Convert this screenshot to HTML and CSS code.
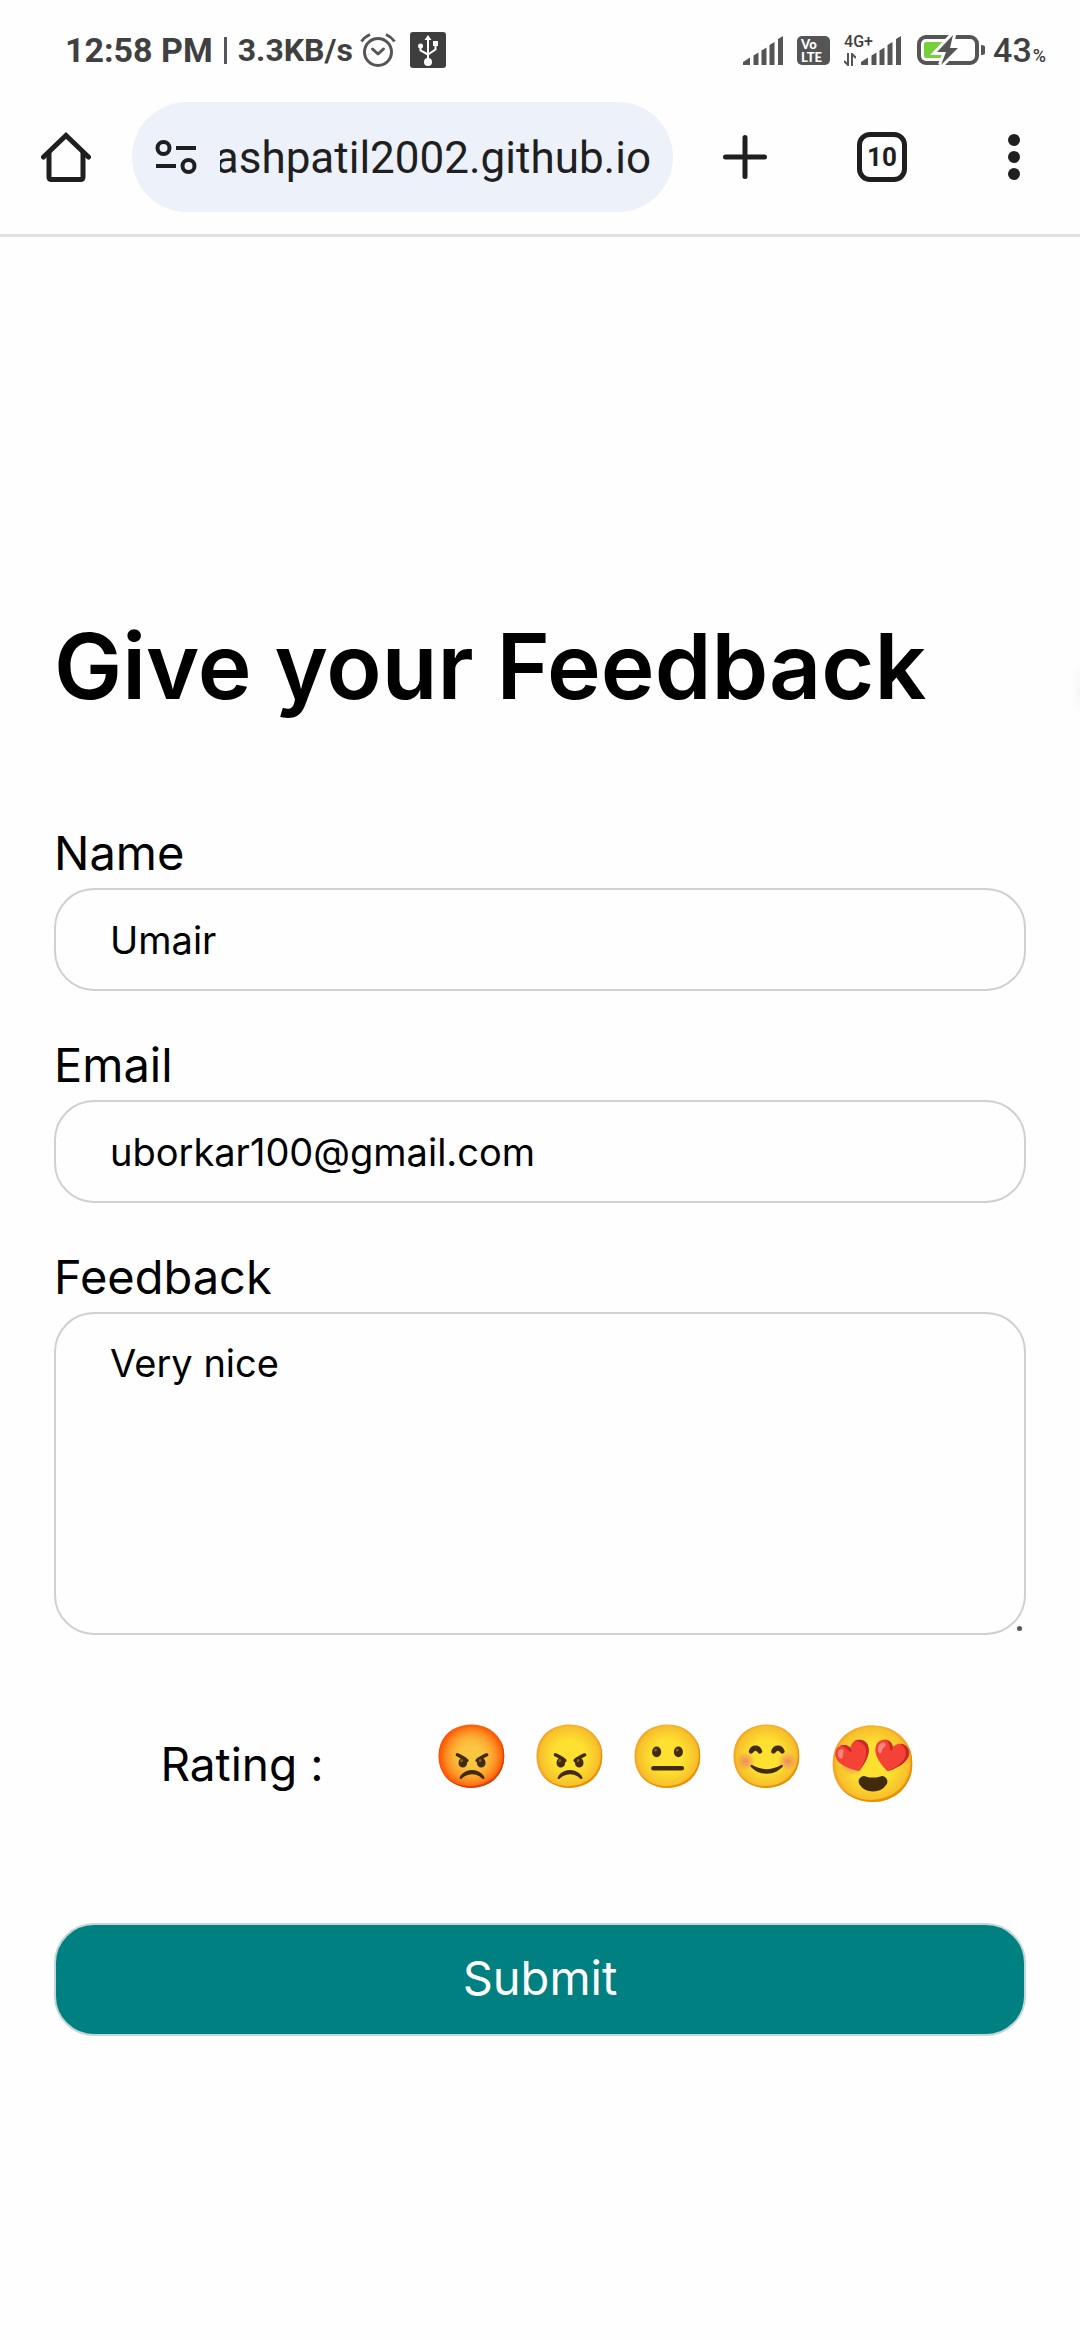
FILE: index.html
```html
<!DOCTYPE html>
<html lang="en">
<head>
  <meta charset="utf-8">
  <meta name="viewport" content="width=device-width, initial-scale=1">
  <title>Give your Feedback</title>
  <link rel="stylesheet" href="styles.css">
</head>
<body>
  <div class="status-bar">
    <div class="status-left">
      <span class="clock">12:58 PM</span>
      <span class="status-divider"></span>
      <span class="speed">3.3KB/s</span>
      <svg class="alarm" width="36" height="36" viewBox="0 0 36 36" fill="none" stroke="#555" stroke-width="3" aria-hidden="true">
        <circle cx="18" cy="20" r="13.500"/>
        <path d="M12.500 17l5.500 5 5.500-5" stroke-linecap="round" stroke-linejoin="round"/>
        <path d="M1.500 9.500Q4.500 5 10 2.500M26 2.500Q31.500 5 34.500 9.500"/>
      </svg>
      <svg class="usb" width="36" height="36" viewBox="0 0 36 36" aria-hidden="true">
        <rect width="36" height="36" rx="3" fill="#3e3e3e"/>
        <path d="M18 30V6M10.500 14v4.500L18 22.500M25.500 13v4.500L18 22.500" fill="none" stroke="#fff" stroke-width="2"/>
        <path d="M18 3l3.500 5h-7zM23 9h5v5h-5z" fill="#fff"/>
        <circle cx="10.500" cy="14" r="2.500" fill="#fff"/>
        <circle cx="18" cy="30" r="4" fill="#fff"/>
      </svg>
    </div>
    <div class="status-right">
      <svg width="40" height="29" viewBox="0 0 40 29" fill="#555" aria-hidden="true">
        <path d="M0 29V26l7-4.500V29zM10.500 29V19.500l5-3V29zM18.500 29V14.500l5-3V29zM26.500 29V9l5-3V29zM35 29V3l5-3V29z"/>
      </svg>
      <span class="volte"><span>Vo</span><span>LTE</span></span>
      <span class="network">
        <span class="network-type">4G+</span>
        <svg width="12" height="13" viewBox="0 0 12 13" fill="none" stroke="#555" stroke-width="2" aria-hidden="true">
          <path d="M4 0V12L0 8M8 13V1l4 4"/>
        </svg>
      </span>
      <svg width="40" height="29" viewBox="0 0 40 29" fill="#555" aria-hidden="true">
        <path d="M0 29V26l7-4.500V29zM10.500 29V19.500l5-3V29zM18.500 29V14.500l5-3V29zM26.500 29V9l5-3V29zM35 29V3l5-3V29z"/>
      </svg>
      <svg class="battery" width="68" height="30" viewBox="0 0 68 30" aria-hidden="true">
        <rect x="2" y="2" width="58" height="26" rx="7" fill="none" stroke="#555" stroke-width="4"/>
        <rect x="7" y="7" width="22" height="16" rx="2" fill="#76d03c"/>
        <path d="M64 10q4 0 4 2v6q0 2-4 2z" fill="#555"/>
        <path d="M36 0L20 17h9l-5 13 17-17h-8z" fill="#555" stroke="#fefefe" stroke-width="6" paint-order="stroke"/>
      </svg>
      <span class="charge">43<small>%</small></span>
    </div>
  </div>

  <header class="toolbar">
    <button class="home" type="button" aria-label="Home">
      <svg width="50" height="50" viewBox="0 0 50 50" fill="none" stroke="#1f1f1f" stroke-width="5" aria-hidden="true">
        <path d="M8 20V45q0 2.500 2.500 2.500H39.500q2.500 0 2.500-2.500V20"/>
        <path d="M2.500 25L25 3.500 47.500 25" stroke-linecap="round"/>
      </svg>
    </button>
    <div class="address">
      <svg width="43" height="36" viewBox="0 0 43 36" fill="none" stroke="#1f1f1f" stroke-width="4" aria-hidden="true">
        <circle cx="8.500" cy="9" r="6"/>
        <path d="M21 9h20M1 27h20"/>
        <circle cx="33.500" cy="27" r="6"/>
      </svg>
      <input class="url" type="text" dir="rtl" value="ashpatil2002.github.io" aria-label="Address">
    </div>
    <button class="new-tab" type="button" aria-label="New tab">
      <svg width="44" height="44" viewBox="0 0 44 44" stroke="#1f1f1f" stroke-width="5" stroke-linecap="round" aria-hidden="true">
        <path d="M22 2.500v39M2.500 22h39"/>
      </svg>
    </button>
    <button class="tabs" type="button" aria-label="10 open tabs"><span class="tab-count">10</span></button>
    <button class="menu" type="button" aria-label="Menu">
      <svg width="12" height="46" viewBox="0 0 12 46" fill="#1f1f1f" aria-hidden="true">
        <circle cx="6" cy="6" r="6"/><circle cx="6" cy="23" r="6"/><circle cx="6" cy="40" r="6"/>
      </svg>
    </button>
  </header>

  <main class="page">
    <h1 class="title">Give your Feedback</h1>
    <form class="feedback-form">
      <div class="field">
        <label class="field-label" for="name">Name</label>
        <input class="control" id="name" type="text" value="Umair">
      </div>
      <div class="field">
        <label class="field-label" for="email">Email</label>
        <input class="control" id="email" type="email" value="uborkar100@gmail.com">
      </div>
      <div class="field message">
        <label class="field-label" for="message">Feedback</label>
        <textarea class="control" id="message" rows="5">Very nice</textarea>
      </div>
      <div class="rating" role="radiogroup" aria-labelledby="rating-label">
        <span class="rating-label" id="rating-label">Rating :</span>
        <div class="faces">
          <label class="face"><input type="radio" name="rating" value="1" aria-label="1">😡</label>
          <label class="face"><input type="radio" name="rating" value="2" aria-label="2">😠</label>
          <label class="face"><input type="radio" name="rating" value="3" aria-label="3">😐</label>
          <label class="face"><input type="radio" name="rating" value="4" aria-label="4">😊</label>
          <label class="face selected"><input type="radio" name="rating" value="5" aria-label="5" checked>😍</label>
        </div>
      </div>
      <button class="submit" type="submit">Submit</button>
    </form>
  </main>
</body>
</html>
```
FILE: styles.css
```css
* {
  box-sizing: border-box;
}

body {
  margin: 0;
  background: #fefefe;
  color: #000;
  font-family: Inter, sans-serif;
}

button {
  margin: 0;
  padding: 0;
  border: 0;
  background: none;
  color: inherit;
  font: inherit;
}

svg {
  display: block;
  flex: none;
}

/* Phone status bar */
.status-bar {
  display: flex;
  justify-content: space-between;
  align-items: center;
  height: 102px;
  padding: 0 34px 2px 65px;
  color: #404040;
  font-family: Roboto, sans-serif;
  font-weight: 500;
}

.status-left,
.status-right {
  display: flex;
  align-items: center;
}

.clock {
  font-size: 34px;
  font-weight: 700;
}

.status-divider {
  width: 3px;
  height: 27px;
  margin: 0 11px;
  background: #555;
}

.speed {
  font-size: 32px;
  font-weight: 700;
}

.alarm {
  margin-left: 7px;
}

.usb {
  margin-left: 14px;
}

.volte {
  display: grid;
  width: 33px;
  height: 29px;
  margin-left: 14px;
  padding: 2px 4px;
  border-radius: 5px;
  background: #555;
  color: #fff;
  font-family: Lato, sans-serif;
  font-size: 13px;
  font-weight: 900;
  line-height: 13px;
}

.network {
  display: grid;
  gap: 4px;
  width: 17px;
  margin-left: 14px;
}

.network-type {
  font-size: 16px;
  line-height: 14px;
}

.battery {
  margin-left: 16px;
}

.charge {
  margin-left: 8px;
  font-size: 34px;
}

.charge small {
  margin-left: 1px;
  font-size: 18px;
}

/* Browser toolbar */
.toolbar {
  display: flex;
  align-items: center;
  height: 135px;
  padding-bottom: 22px;
  border-bottom: 3px solid #e1e1e1;
  color: #1f1f1f;
  font-family: Roboto, sans-serif;
}

.toolbar button {
  display: flex;
  justify-content: center;
  align-items: center;
  height: 110px;
}

.toolbar .home {
  width: 132px;
}

.toolbar .new-tab {
  width: 144px;
}

.toolbar .tabs {
  width: 130px;
}

.toolbar .menu {
  width: 133px;
}

.address {
  display: flex;
  flex: 1;
  align-items: center;
  gap: 22px;
  min-width: 0;
  height: 110px;
  padding: 0 22px 0 23px;
  border-radius: 55px;
  background: #ecf1fa;
}

.url {
  flex: 1;
  min-width: 0;
  padding: 2px 0 0;
  border: 0;
  outline: 0;
  background: none;
  color: #1f1f1f;
  font: 44px Roboto, sans-serif;
}

.tab-count {
  display: grid;
  place-items: center;
  width: 50px;
  height: 50px;
  border: 5px solid #1f1f1f;
  border-radius: 13px;
  font-size: 26px;
  font-weight: 700;
}

/* Feedback page */
.page {
  position: relative;
  overflow: hidden;
  padding: 369px 54px 300px;
}

.page::after {
  content: "";
  position: absolute;
  top: 430px;
  right: -24px;
  width: 20px;
  height: 44px;
  border-radius: 10px;
  box-shadow: 0 0 16px rgba(0, 0, 0, 0.10);
}

.title {
  margin: 0 0 92px;
  font-size: 91px;
  font-weight: 600;
  line-height: 120px;
}

.field {
  margin-bottom: 39px;
}

.field-label {
  display: block;
  font-size: 47px;
  line-height: 70px;
}

.control {
  display: block;
  width: 100%;
  margin: 0;
  padding: 22px 54px;
  border: 2px solid #d0d0d0;
  border-radius: 40px;
  outline: 0;
  background: none;
  color: #000;
  font-family: inherit;
  font-size: 38px;
  line-height: 55px;
  resize: none;
}

input.control {
  height: 103px;
}

.message {
  position: relative;
}

/* Resize grip */
.message::after {
  content: "";
  position: absolute;
  right: 4px;
  bottom: 4px;
  width: 5px;
  height: 5px;
  border-radius: 3px;
  background: #555;
}

.rating {
  display: flex;
  justify-content: center;
  align-items: center;
  gap: 110px;
  margin: 87px 0 117px;
}

.rating-label {
  font-size: 46px;
  line-height: 70px;
}

.faces {
  display: flex;
  align-items: flex-start;
  gap: 21px;
}

.face {
  position: relative;
  height: 70px;
  font-family: "Noto Color Emoji", sans-serif;
  font-size: 62px;
  line-height: 70px;
}

.face.selected {
  height: 84px;
  font-size: 75px;
  line-height: 84px;
}

.face input {
  position: absolute;
  inset: 0;
  width: 100%;
  height: 100%;
  margin: 0;
  opacity: 0;
}

.submit {
  display: block;
  width: 100%;
  padding: 18px 0 22px;
  border: 2px solid #c5d6d6;
  border-radius: 40px;
  background: #008080;
  color: #fff;
  font-size: 47px;
  line-height: 69px;
}
```
